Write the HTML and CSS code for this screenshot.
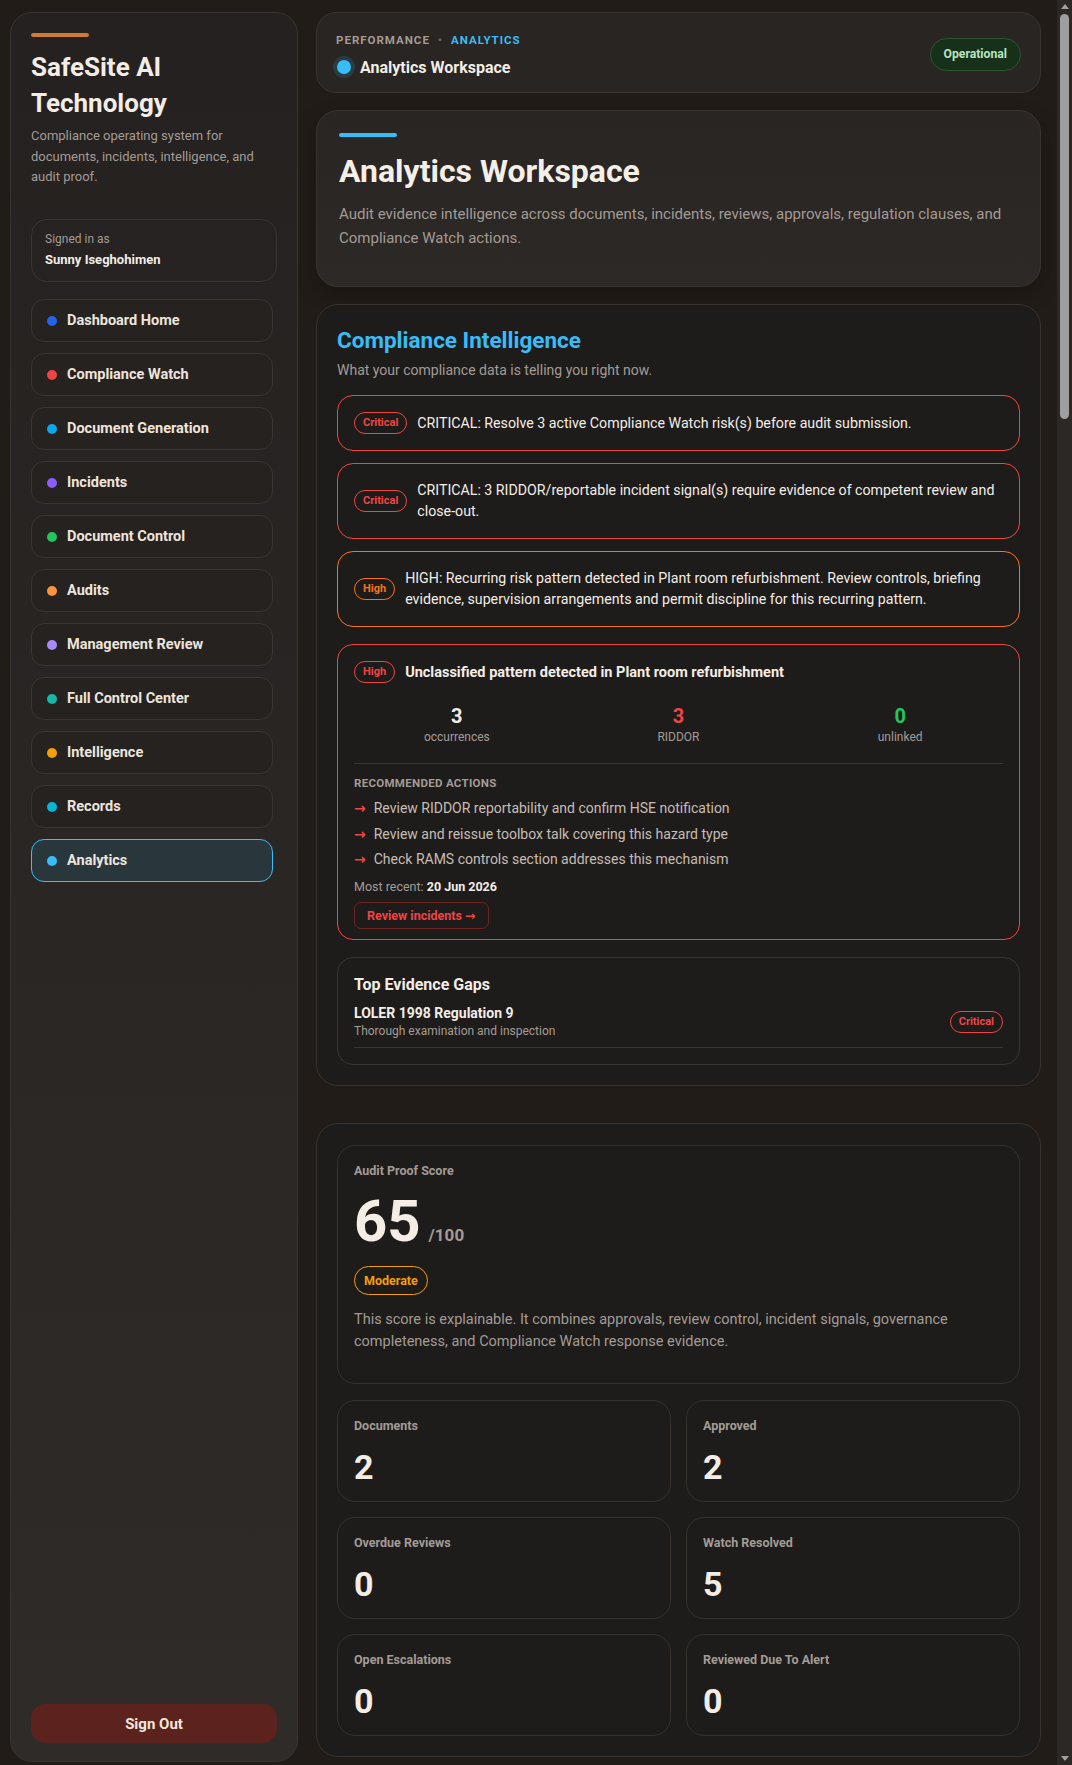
FILE: index.html
```html
<!DOCTYPE html>
<html lang="en">
<head>
    <meta charset="UTF-8">
    <meta name="viewport" content="width=device-width, initial-scale=1.0">
    <title>Analytics Workspace - SafeSite AI</title>
    <link rel="stylesheet" href="styles.css">
</head>
<body>
    <div class="layout">
        <aside class="sidebar">
            <div class="brand-bar"></div>
            <h1 class="brand-title">SafeSite AI Technology</h1>
            <p class="brand-text">Compliance operating system for documents, incidents, intelligence, and audit proof.</p>

            <div class="user-box">
                <span class="user-label">Signed in as</span>
                <strong class="user-name">Sunny Iseghohimen</strong>
            </div>

            <nav class="nav">
                <a class="nav-item" href="#"><span class="dot dot-blue"></span>Dashboard Home</a>
                <a class="nav-item" href="#"><span class="dot dot-red"></span>Compliance Watch</a>
                <a class="nav-item" href="#"><span class="dot dot-sky"></span>Document Generation</a>
                <a class="nav-item" href="#"><span class="dot dot-purple"></span>Incidents</a>
                <a class="nav-item" href="#"><span class="dot dot-green"></span>Document Control</a>
                <a class="nav-item" href="#"><span class="dot dot-orange"></span>Audits</a>
                <a class="nav-item" href="#"><span class="dot dot-violet"></span>Management Review</a>
                <a class="nav-item" href="#"><span class="dot dot-teal"></span>Full Control Center</a>
                <a class="nav-item" href="#"><span class="dot dot-amber"></span>Intelligence</a>
                <a class="nav-item" href="#"><span class="dot dot-cyan"></span>Records</a>
                <a class="nav-item active" href="#"><span class="dot dot-analytics"></span>Analytics</a>
            </nav>

            <button class="signout">Sign Out</button>
        </aside>

        <main class="main">
            <!-- top bar -->
            <header class="topbar">
                <div>
                    <div class="crumbs">
                        <span>Performance</span>
                        <span class="crumb-sep">&bull;</span>
                        <span class="crumb-active">Analytics</span>
                    </div>
                    <div class="page-name"><span class="page-dot"></span>Analytics Workspace</div>
                </div>
                <span class="status-pill">Operational</span>
            </header>

            <section class="hero">
                <div class="hero-bar"></div>
                <h2>Analytics Workspace</h2>
                <p>Audit evidence intelligence across documents, incidents, reviews, approvals, regulation clauses, and Compliance Watch actions.</p>
            </section>

            <!-- compliance intelligence -->
            <section class="panel intel">
                <h3 class="intel-title">Compliance Intelligence</h3>
                <p class="intel-sub">What your compliance data is telling you right now.</p>

                <div class="alerts">
                    <div class="alert alert-critical">
                        <span class="badge badge-red">Critical</span>
                        <p>CRITICAL: Resolve 3 active Compliance Watch risk(s) before audit submission.</p>
                    </div>
                    <div class="alert alert-critical">
                        <span class="badge badge-red">Critical</span>
                        <p>CRITICAL: 3 RIDDOR/reportable incident signal(s) require evidence of competent review and close-out.</p>
                    </div>
                    <div class="alert alert-high">
                        <span class="badge badge-orange">High</span>
                        <p>HIGH: Recurring risk pattern detected in Plant room refurbishment. Review controls, briefing evidence, supervision arrangements and permit discipline for this recurring pattern.</p>
                    </div>
                </div>

                <div class="pattern">
                    <div class="pattern-head">
                        <span class="badge badge-red">High</span>
                        <strong>Unclassified pattern detected in Plant room refurbishment</strong>
                    </div>
                    <div class="pattern-stats">
                        <div class="pstat"><b>3</b><span>occurrences</span></div>
                        <div class="pstat"><b class="red">3</b><span>RIDDOR</span></div>
                        <div class="pstat"><b class="green">0</b><span>unlinked</span></div>
                    </div>
                    <div class="actions-title">Recommended Actions</div>
                    <ul class="actions">
                        <li><span class="arrow">&rarr;</span>Review RIDDOR reportability and confirm HSE notification</li>
                        <li><span class="arrow">&rarr;</span>Review and reissue toolbox talk covering this hazard type</li>
                        <li><span class="arrow">&rarr;</span>Check RAMS controls section addresses this mechanism</li>
                    </ul>
                    <div class="recent">Most recent: <b>20 Jun 2026</b></div>
                    <button class="review-btn">Review incidents &rarr;</button>
                </div>

                <div class="gaps">
                    <h4>Top Evidence Gaps</h4>
                    <div class="gap-row">
                        <div>
                            <strong>LOLER 1998 Regulation 9</strong>
                            <span>Thorough examination and inspection</span>
                        </div>
                        <span class="badge badge-red">Critical</span>
                    </div>
                </div>
            </section>

            <!-- audit proof score -->
            <section class="panel score-panel">
                <div class="score-card">
                    <div class="card-label">Audit Proof Score</div>
                    <div class="score"><span class="score-num">65</span><span class="score-max">/100</span></div>
                    <span class="badge badge-amber">Moderate</span>
                    <p>This score is explainable. It combines approvals, review control, incident signals, governance completeness, and Compliance Watch response evidence.</p>
                </div>

                <div class="stat-grid">
                    <div class="stat"><div class="card-label">Documents</div><div class="stat-num">2</div></div>
                    <div class="stat"><div class="card-label">Approved</div><div class="stat-num">2</div></div>
                    <div class="stat"><div class="card-label">Overdue Reviews</div><div class="stat-num">0</div></div>
                    <div class="stat"><div class="card-label">Watch Resolved</div><div class="stat-num">5</div></div>
                    <div class="stat"><div class="card-label">Open Escalations</div><div class="stat-num">0</div></div>
                    <div class="stat"><div class="card-label">Reviewed Due To Alert</div><div class="stat-num">0</div></div>
                </div>
            </section>
        </main>
    </div>

    <div class="scroll-track" aria-hidden="true">
        <span class="scroll-up"></span>
        <span class="scroll-thumb"></span>
        <span class="scroll-down"></span>
    </div>
</body>
</html>
```

FILE: styles.css
```css
html {
    color-scheme: dark;
}

body {
    margin: 0;
    background: #211c17;
    color: #f3ede6;
    font-family: Roboto, "Noto Sans", "DejaVu Sans", sans-serif;
}

.layout {
    display: grid;
    grid-template-columns: 288px 1fr;
    gap: 18px;
    align-items: start;
    padding: 12px 31px 12px 10px;
}

/* sidebar */
.sidebar {
    position: sticky;
    top: 12px;
    height: calc(100vh - 15px);
    box-sizing: border-box;
    display: flex;
    flex-direction: column;
    padding: 20px 20px 18px;
    border: 1px solid #3a3430;
    border-radius: 22px;
    background: linear-gradient(180deg, #242120 0%, #2f2b28 100%);
}

.brand-bar {
    width: 58px;
    height: 4px;
    border-radius: 4px;
    background: #d07a32;
}

.brand-title {
    margin: 12px 0 5px;
    font-size: 26px;
    line-height: 36px;
    font-weight: 700;
    color: #f3ede6;
}

.brand-text {
    margin: 0;
    font-size: 13px;
    line-height: 20.7px;
    color: #a39b94;
}

.user-box {
    margin-top: 31px;
    padding: 11px 13px 12px;
    border: 1px solid #3a3531;
    border-radius: 16px;
    display: flex;
    flex-direction: column;
    gap: 3px;
}

.user-label {
    font-size: 12px;
    line-height: 17px;
    color: #a39b94;
}

.user-name {
    font-size: 13px;
    line-height: 18px;
    color: #f3ede6;
}

.nav {
    margin-top: 17px;
    display: flex;
    flex-direction: column;
    gap: 11px;
}

.nav-item {
    display: flex;
    align-items: center;
    gap: 10px;
    height: 43px;
    box-sizing: border-box;
    padding: 0 15px;
    margin-right: 4px;
    border: 1px solid #3a3531;
    border-radius: 13px;
    background: #262220;
    color: #ede5dd;
    font-size: 14.5px;
    font-weight: 700;
    text-decoration: none;
}

.nav-item.active {
    background: #29373d;
    border-color: #38bdf8;
}

.dot {
    width: 10px;
    height: 10px;
    border-radius: 50%;
    flex-shrink: 0;
}

.dot-blue { background: #2563eb; }
.dot-red { background: #ef4444; }
.dot-sky { background: #0ea5e9; }
.dot-purple { background: #8b5cf6; }
.dot-green { background: #22c55e; }
.dot-orange { background: #fb923c; }
.dot-violet { background: #a78bfa; }
.dot-teal { background: #14b8a6; }
.dot-amber { background: #f59e0b; }
.dot-cyan { background: #06b6d4; }
.dot-analytics { background: #38bdf8; }

.signout {
    margin-top: auto;
    height: 39px;
    border: none;
    border-radius: 14px;
    background: #5c221e;
    color: #f0e6dc;
    font-family: inherit;
    font-size: 15px;
    font-weight: 700;
}

/* main column */
.main {
    display: flex;
    flex-direction: column;
    gap: 17px;
}

.topbar {
    display: flex;
    justify-content: space-between;
    align-items: center;
    padding: 18px 19px 14px 19px;
    border: 1px solid #3a3430;
    border-radius: 20px;
    background: #292522;
}

.crumbs {
    display: flex;
    gap: 8px;
    font-size: 11.5px;
    line-height: 18px;
    font-weight: 700;
    letter-spacing: 1px;
    text-transform: uppercase;
    color: #a49b92;
}

.crumb-sep {
    color: #6e655e;
}

.crumb-active {
    color: #38bdf8;
}

.page-name {
    margin-top: 7px;
    display: flex;
    align-items: center;
    gap: 9px;
    height: 22px;
    font-size: 16px;
    font-weight: 700;
    color: #f3ede6;
}

.page-dot {
    width: 14px;
    height: 14px;
    margin-left: 1px;
    border-radius: 50%;
    background: #38bdf8;
    box-shadow: 0 0 0 4px rgba(56, 189, 248, 0.15);
}

.status-pill {
    padding: 0 13px;
    height: 31px;
    line-height: 31px;
    border: 1px solid #2f5533;
    border-radius: 999px;
    background: #17301a;
    color: #b9e3c0;
    font-size: 12.2px;
    font-weight: 700;
}

.hero {
    padding: 22px 22px 36px;
    border: 1px solid #3a3430;
    border-radius: 22px;
    background: linear-gradient(180deg, #292522 0%, #2d2927 100%);
    box-shadow: 0 8px 20px rgba(0, 0, 0, 0.25);
}

.hero-bar {
    width: 58px;
    height: 4px;
    border-radius: 4px;
    background: #38bdf8;
}

.hero h2 {
    margin: 14px 0 10px;
    font-size: 32px;
    line-height: 41px;
    font-weight: 700;
    color: #f5efe8;
}

.hero p {
    margin: 0;
    font-size: 15px;
    line-height: 24px;
    color: #a39b94;
}

.panel {
    padding: 21px 20px 20px;
    border: 1px solid #38332f;
    border-radius: 22px;
    background: #1e1c1b;
}

.intel-title {
    margin: 0;
    font-size: 22.5px;
    line-height: 28px;
    font-weight: 700;
    color: #38bdf8;
}

.intel-sub {
    margin: 6px 0 15px;
    font-size: 14px;
    line-height: 20px;
    color: #a39b94;
}

.alerts {
    display: flex;
    flex-direction: column;
    gap: 12px;
}

.alert {
    display: flex;
    align-items: center;
    gap: 10px;
    padding: 16px;
    border: 1px solid #ef4444;
    border-radius: 16px;
}

.alert p {
    margin: 0;
    font-size: 14.2px;
    line-height: 21px;
    color: #f3ede6;
}

.alert-high {
    border-color: #f97316;
}

.badge {
    flex-shrink: 0;
    display: inline-block;
    padding: 0 8px;
    height: 20px;
    line-height: 20px;
    border: 1px solid;
    border-radius: 999px;
    font-size: 11px;
    font-weight: 700;
}

.badge-red {
    color: #ef4444;
    border-color: #ef4444;
}

.badge-orange {
    color: #f97316;
    border-color: #f97316;
}

.badge-amber {
    height: 27px;
    line-height: 27px;
    padding: 0 9px;
    color: #f59e0b;
    border-color: #f59e0b;
    font-size: 12.5px;
}

.pattern {
    margin-top: 17px;
    padding: 16px 16px 10px;
    border: 1px solid #ef4444;
    border-radius: 16px;
}

.pattern-head {
    display: flex;
    align-items: center;
    gap: 10px;
    font-size: 14.5px;
}

.pattern-stats {
    display: grid;
    grid-template-columns: repeat(3, 1fr);
    gap: 16px;
    margin-top: 20px;
    padding-bottom: 18px;
    border-bottom: 1px solid #3a3430;
    text-align: center;
}

.pstat b {
    display: block;
    font-size: 20px;
    line-height: 26px;
}

.pstat span {
    display: block;
    font-size: 12px;
    line-height: 16px;
    color: #a39b94;
}

.red { color: #ef4444; }
.green { color: #22c55e; }

.actions-title {
    margin-top: 11px;
    font-size: 11.5px;
    line-height: 16px;
    font-weight: 700;
    letter-spacing: 0.3px;
    text-transform: uppercase;
    color: #a39b94;
}

.actions {
    list-style: none;
    margin: 7px 0 0;
    padding: 0;
    display: flex;
    flex-direction: column;
    gap: 5.5px;
}

.actions li {
    display: flex;
    align-items: center;
    gap: 8px;
    font-size: 14px;
    line-height: 20px;
    color: #c6bdb4;
}

.arrow {
    color: #ef4444;
    font-weight: 700;
}

.recent {
    margin-top: 9px;
    font-size: 12.5px;
    line-height: 18px;
    color: #a39b94;
}

.recent b {
    color: #f3ede6;
}

.review-btn {
    margin-top: 6px;
    height: 27px;
    padding: 0 12px;
    border: 1px solid #6e2320;
    border-radius: 7px;
    background: transparent;
    color: #ef4444;
    font-family: inherit;
    font-size: 12.5px;
    font-weight: 700;
}

.gaps {
    margin-top: 17px;
    padding: 16px;
    border: 1px solid #3a3430;
    border-radius: 16px;
}

.gaps h4 {
    margin: 0 0 8px;
    font-size: 16px;
    line-height: 22px;
    font-weight: 700;
    color: #f3ede6;
}

.gap-row {
    display: flex;
    justify-content: space-between;
    align-items: center;
    padding-bottom: 7px;
    border-bottom: 1px solid #3a3430;
}

.gap-row strong {
    display: block;
    font-size: 14px;
    line-height: 19px;
}

.gap-row span:not(.badge) {
    display: block;
    font-size: 12px;
    line-height: 17px;
    color: #a39b94;
}

/* score */
.score-panel {
    margin-top: 20px;
}

.score-card {
    padding: 16px 16px 30px;
    border: 1px solid #36312d;
    border-radius: 18px;
}

.card-label {
    font-size: 12.5px;
    line-height: 18px;
    font-weight: 700;
    color: #a39b94;
}

.score {
    display: flex;
    align-items: baseline;
    gap: 8px;
    margin: 12px 0 16px;
}

.score-num {
    font-size: 58px;
    line-height: 58px;
    font-weight: 700;
    color: #f3ede6;
}

.score-max {
    font-size: 17px;
    font-weight: 700;
    color: #a39b94;
}

.score-card p {
    margin: 14px 0 0;
    font-size: 14.5px;
    line-height: 22px;
    color: #a39b94;
}

.stat-grid {
    display: grid;
    grid-template-columns: 1fr 1fr;
    gap: 15px;
    margin-top: 16px;
}

.stat {
    height: 102px;
    box-sizing: border-box;
    padding: 16px 16px 0;
    border: 1px solid #36312d;
    border-radius: 18px;
}

.stat-num {
    margin-top: 12px;
    font-size: 34px;
    line-height: 40px;
    font-weight: 700;
    color: #f3ede6;
}

/* scroll indicator */
.scroll-track {
    position: fixed;
    top: 0;
    right: 0;
    width: 15px;
    height: 100vh;
    display: flex;
    flex-direction: column;
    align-items: center;
    background: #2b2825;
}

.scroll-up,
.scroll-down {
    width: 0;
    height: 0;
    border-left: 4px solid transparent;
    border-right: 4px solid transparent;
}

.scroll-up {
    margin-top: 4px;
    border-bottom: 5px solid #a3a1a0;
}

.scroll-down {
    margin-top: auto;
    margin-bottom: 4px;
    border-top: 5px solid #a3a1a0;
}

.scroll-thumb {
    margin-top: 5px;
    width: 9px;
    height: 405px;
    border-radius: 5px;
    background: #9f9e9d;
}
```
